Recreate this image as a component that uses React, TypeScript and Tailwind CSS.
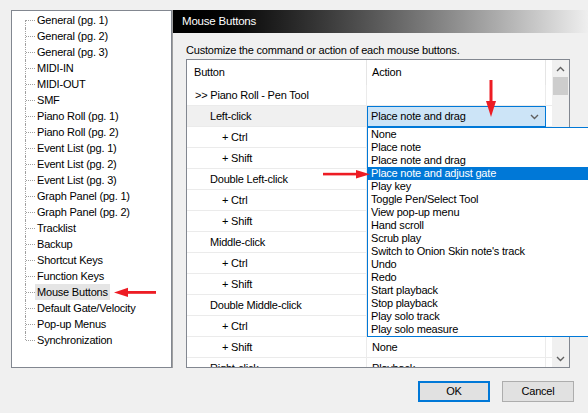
import React from "react";

const treeItems = [
  "General (pg. 1)",
  "General (pg. 2)",
  "General (pg. 3)",
  "MIDI-IN",
  "MIDI-OUT",
  "SMF",
  "Piano Roll (pg. 1)",
  "Piano Roll (pg. 2)",
  "Event List (pg. 1)",
  "Event List (pg. 2)",
  "Event List (pg. 3)",
  "Graph Panel (pg. 1)",
  "Graph Panel (pg. 2)",
  "Tracklist",
  "Backup",
  "Shortcut Keys",
  "Function Keys",
  "Mouse Buttons",
  "Default Gate/Velocity",
  "Pop-up Menus",
  "Synchronization",
];

type Row = { label: string; level: 0 | 1 | 2; action?: string; combo?: boolean; selected?: boolean };

const rows: Row[] = [
  { label: ">> Piano Roll - Pen Tool", level: 0 },
  { label: "Left-click", level: 1, combo: true, selected: true },
  { label: "+ Ctrl", level: 2 },
  { label: "+ Shift", level: 2 },
  { label: "Double Left-click", level: 1 },
  { label: "+ Ctrl", level: 2 },
  { label: "+ Shift", level: 2 },
  { label: "Middle-click", level: 1 },
  { label: "+ Ctrl", level: 2 },
  { label: "+ Shift", level: 2 },
  { label: "Double Middle-click", level: 1 },
  { label: "+ Ctrl", level: 2 },
  { label: "+ Shift", level: 2, action: "None" },
  { label: "Right-click", level: 1, action: "Playback" },
];

const options = [
  "None",
  "Place note",
  "Place note and drag",
  "Place note and adjust gate",
  "Play key",
  "Toggle Pen/Select Tool",
  "View pop-up menu",
  "Hand scroll",
  "Scrub play",
  "Switch to Onion Skin note's track",
  "Undo",
  "Redo",
  "Start playback",
  "Stop playback",
  "Play solo track",
  "Play solo measure",
];

function Chevron({ up = false }: { up?: boolean }) {
  return (
    <svg width="9" height="6" viewBox="0 0 9 6" className="block">
      <path
        d={up ? "M1 5 L4.5 1.5 L8 5" : "M1 1 L4.5 4.5 L8 1"}
        fill="none"
        stroke="#606060"
        strokeWidth="1.4"
      />
    </svg>
  );
}

function indentClass(level: 0 | 1 | 2) {
  if (level === 0) return "pl-[8px]";
  if (level === 1) return "pl-[23px]";
  return "pl-[35px]";
}

export default function App() {
  return (
    <div className="relative w-[588px] h-[413px] overflow-hidden bg-[#f0f0f0] font-['Liberation_Sans',Arial,sans-serif] text-[11px] tracking-[-0.2px] text-black">
      <div className="flex pt-[10px] h-[368px]">
        {/* Left tree */}
        <div className="ml-[11px] w-[161px] h-[358px] border border-[#828790] bg-white pt-[1px]">
          {treeItems.map((t, i) => {
            const first = i === 0;
            const last = i === treeItems.length - 1;
            return (
              <div key={i} className="flex items-center h-[16px]">
                <div className="relative w-[23px] h-[16px] shrink-0">
                  <div
                    className={
                      "absolute left-[13px] border-l border-dotted border-[#a0a0a0] " +
                      (first ? "top-[8px] bottom-0" : last ? "top-0 h-[8px]" : "top-0 bottom-0")
                    }
                  />
                  <div className="absolute left-[14px] top-[8px] w-[9px] border-t border-dotted border-[#a0a0a0]" />
                </div>
                <span
                  className={
                    "px-[2px] h-[16px] leading-[16px] whitespace-nowrap " +
                    (t === "Mouse Buttons" ? "bg-[#e5e5e5]" : "")
                  }
                >
                  {t}
                </span>
              </div>
            );
          })}
        </div>

        {/* Right panel */}
        <div className="flex-1 flex flex-col border-l border-[#a0a0a0] h-[358px]">
          <div className="h-[23px] bg-gradient-to-r from-[#000000] to-[#efefef] text-white pl-[9px] leading-[23px] text-[11.5px]">
            Mouse Buttons
          </div>
          <div className="pt-[9px] pl-[13px] h-[25px] leading-[16px] whitespace-nowrap">
            Customize the command or action of each mouse buttons.
          </div>
          <div className="ml-[13px] mr-[18px] mt-[1px] h-[309px] border border-[#828790] bg-white flex overflow-hidden">
            <div className="w-[365px] flex flex-col">
              {/* header */}
              <div className="flex h-[25px] shrink-0">
                <div className="w-[180px] border-r border-[#e5e5e5] pl-[7px] leading-[25px]">Button</div>
                <div className="w-[179px] border-r border-[#e5e5e5] pl-[5px] leading-[25px]">Action</div>
                <div className="flex-1" />
              </div>
              {rows.map((r, i) => (
                <div key={i} className="flex h-[21px] shrink-0">
                  <div
                    className={
                      "w-[180px] border-r border-b border-[#ebebeb] leading-[20px] whitespace-nowrap " +
                      indentClass(r.level) +
                      (r.selected ? " bg-[#f0f0f0]" : "")
                    }
                  >
                    {r.label}
                  </div>
                  {r.combo ? (
                    <div className="w-[179px] h-[21px] border border-[#0078d7] bg-[#cce4f7] flex items-center justify-between pl-[3px] pr-[6px]">
                      <span className="whitespace-nowrap">Place note and drag</span>
                      <Chevron />
                    </div>
                  ) : (
                    <div className="w-[179px] border-r border-b border-[#ebebeb] pl-[5px] leading-[20px] whitespace-nowrap">
                      {r.action ?? ""}
                    </div>
                  )}
                  <div className="flex-1 border-b border-[#ebebeb]" />
                </div>
              ))}
            </div>
            {/* scrollbar */}
            <div className="w-[17px] bg-[#f0f0f0] flex flex-col">
              <div className="h-[17px] flex items-center justify-center">
                <Chevron up />
              </div>
              <div className="mx-[1px] h-[18px] bg-[#cdcdcd]" />
              <div className="flex-1" />
              <div className="h-[17px] flex items-center justify-center">
                <Chevron />
              </div>
            </div>
          </div>
        </div>
      </div>

      {/* Buttons */}
      <div className="flex justify-end gap-[12px] pr-[14px] mt-[13px]">
        <button className="w-[72px] h-[21px] border-2 border-[#0078d7] bg-[#e1e1e1] text-center leading-[17px]">
          OK
        </button>
        <button className="w-[72px] h-[21px] border border-[#adadad] bg-[#e1e1e1] text-center leading-[19px]">
          Cancel
        </button>
      </div>

      {/* Dropdown list overlay */}
      <div className="absolute left-[367px] top-[127px] w-[240px] border border-[#0078d7] bg-white">
        {options.map((o, i) => (
          <div
            key={i}
            className={
              "h-[13px] leading-[13px] pl-[3px] whitespace-nowrap " +
              (i === 3 ? "bg-[#0078d7] text-white" : "")
            }
          >
            {o}
          </div>
        ))}
      </div>

      {/* Red annotation arrows */}
      <svg className="absolute inset-0 pointer-events-none" width="588" height="413" viewBox="0 0 588 413">
        <g fill="#ed1c24">
          <rect x="489.5" y="80" width="3" height="24" />
          <polygon points="486,101 496,101 491,117" />
          <rect x="323" y="172.8" width="36" height="2.6" />
          <polygon points="356,170 356,178.6 370,174.2" />
          <rect x="126" y="291" width="30" height="2.8" />
          <polygon points="114,292.4 128,287.8 128,297" />
        </g>
      </svg>
    </div>
  );
}
